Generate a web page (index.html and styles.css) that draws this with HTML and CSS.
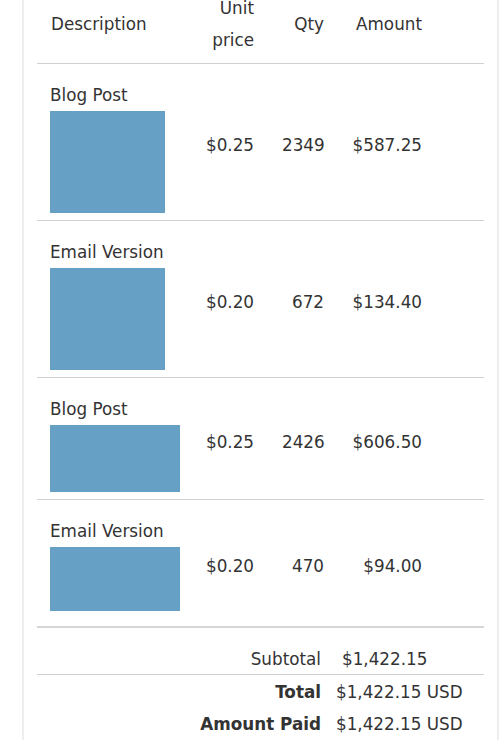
FILE: index.html
```html
<!DOCTYPE html>
<html>
<head>
<meta charset="utf-8">
<link rel="stylesheet" href="styles.css">
</head>
<body>
<div class="card">
  <table class="items">
    <thead>
      <tr>
        <th class="c-desc">Description</th>
        <th class="c-unit">Unit<br>price</th>
        <th class="c-qty">Qty</th>
        <th class="c-amt">Amount</th>
        <th class="c-pad"></th>
      </tr>
    </thead>
    <tbody>
      <tr>
        <td class="c-desc"><div class="label">Blog Post</div><div class="thumb thumb-a"></div></td>
        <td class="c-unit">$0.25</td>
        <td class="c-qty">2349</td>
        <td class="c-amt">$587.25</td>
        <td class="c-pad"></td>
      </tr>
      <tr>
        <td class="c-desc"><div class="label">Email Version</div><div class="thumb thumb-a"></div></td>
        <td class="c-unit">$0.20</td>
        <td class="c-qty">672</td>
        <td class="c-amt">$134.40</td>
        <td class="c-pad"></td>
      </tr>
      <tr>
        <td class="c-desc"><div class="label">Blog Post</div><div class="thumb thumb-b"></div></td>
        <td class="c-unit">$0.25</td>
        <td class="c-qty">2426</td>
        <td class="c-amt">$606.50</td>
        <td class="c-pad"></td>
      </tr>
      <tr class="last">
        <td class="c-desc"><div class="label">Email Version</div><div class="thumb thumb-c"></div></td>
        <td class="c-unit">$0.20</td>
        <td class="c-qty">470</td>
        <td class="c-amt">$94.00</td>
        <td class="c-pad"></td>
      </tr>
    </tbody>
  </table>
  <div class="totals">
    <div class="row row-sub">
      <div class="t-label">Subtotal</div>
      <div class="t-value">$1,422.15</div>
    </div>
    <div class="row row-total">
      <div class="t-label strong">Total</div>
      <div class="t-value">$1,422.15 USD</div>
    </div>
    <div class="row row-paid">
      <div class="t-label strong">Amount Paid</div>
      <div class="t-value">$1,422.15 USD</div>
    </div>
  </div>
</div>
</body>
</html>
```
FILE: styles.css
```css
html, body {
  margin: 0;
  padding: 0;
  background: #fff;
}
body {
  font-family: "DejaVu Sans", Verdana, sans-serif;
  font-size: 16.8px;
  color: #333;
  overflow: hidden;
}
.card {
  margin: -8px 1px 0 22px;
  border-left: 2px solid #eeeeee;
  border-right: 2px solid #eeeeee;
  padding: 0 13px 20px 13px;
}
.items {
  width: 100%;
  border-collapse: collapse;
  table-layout: fixed;
}
.items th {
  font-weight: normal;
  line-height: 32px;
  vertical-align: middle;
  border-bottom: 1px solid #d0d0d0;
}
.items td {
  line-height: 22px;
  vertical-align: middle;
  border-bottom: 1px solid #d0d0d0;
}
.c-desc { width: 127px; text-align: left; padding: 20px 14px 7px 13px; }
.c-unit { width: 48px; text-align: right; padding: 6px 14px 0; }
.c-qty { width: 42px; text-align: right; padding: 6px 14px 0; }
.c-amt { width: 70px; text-align: right; padding: 6px 14px 0; }
.c-pad { padding: 0; }
.items th.c-desc,
.items th.c-unit,
.items th.c-qty,
.items th.c-amt { padding: 0 14px 7px; }
.items tr.last td { border-bottom: 2px solid #d6d6d6; }
.items tr.last td.c-desc { padding-bottom: 15px; }
.label {
  white-space: nowrap;
}
.thumb {
  margin-top: 5px;
  background: #66a0c5;
}
.thumb-a { width: 115px; height: 102px; }
.thumb-b { width: 130px; height: 67px; }
.thumb-c { width: 130px; height: 64px; }
.totals {
  display: flex;
  flex-direction: column;
}
.row {
  display: grid;
  grid-template-columns: 284px 1fr;
  line-height: 22px;
}
.row-sub {
  padding: 20px 0 4px;
  border-bottom: 1px solid #d0d0d0;
}
.row-sub .t-value { padding-left: 21px; }
.row-total { padding-top: 6px; }
.row-paid { padding-top: 10px; }
.t-label { text-align: right; }
.t-value { padding-left: 15px; white-space: nowrap; }
.strong { font-weight: bold; }
```
